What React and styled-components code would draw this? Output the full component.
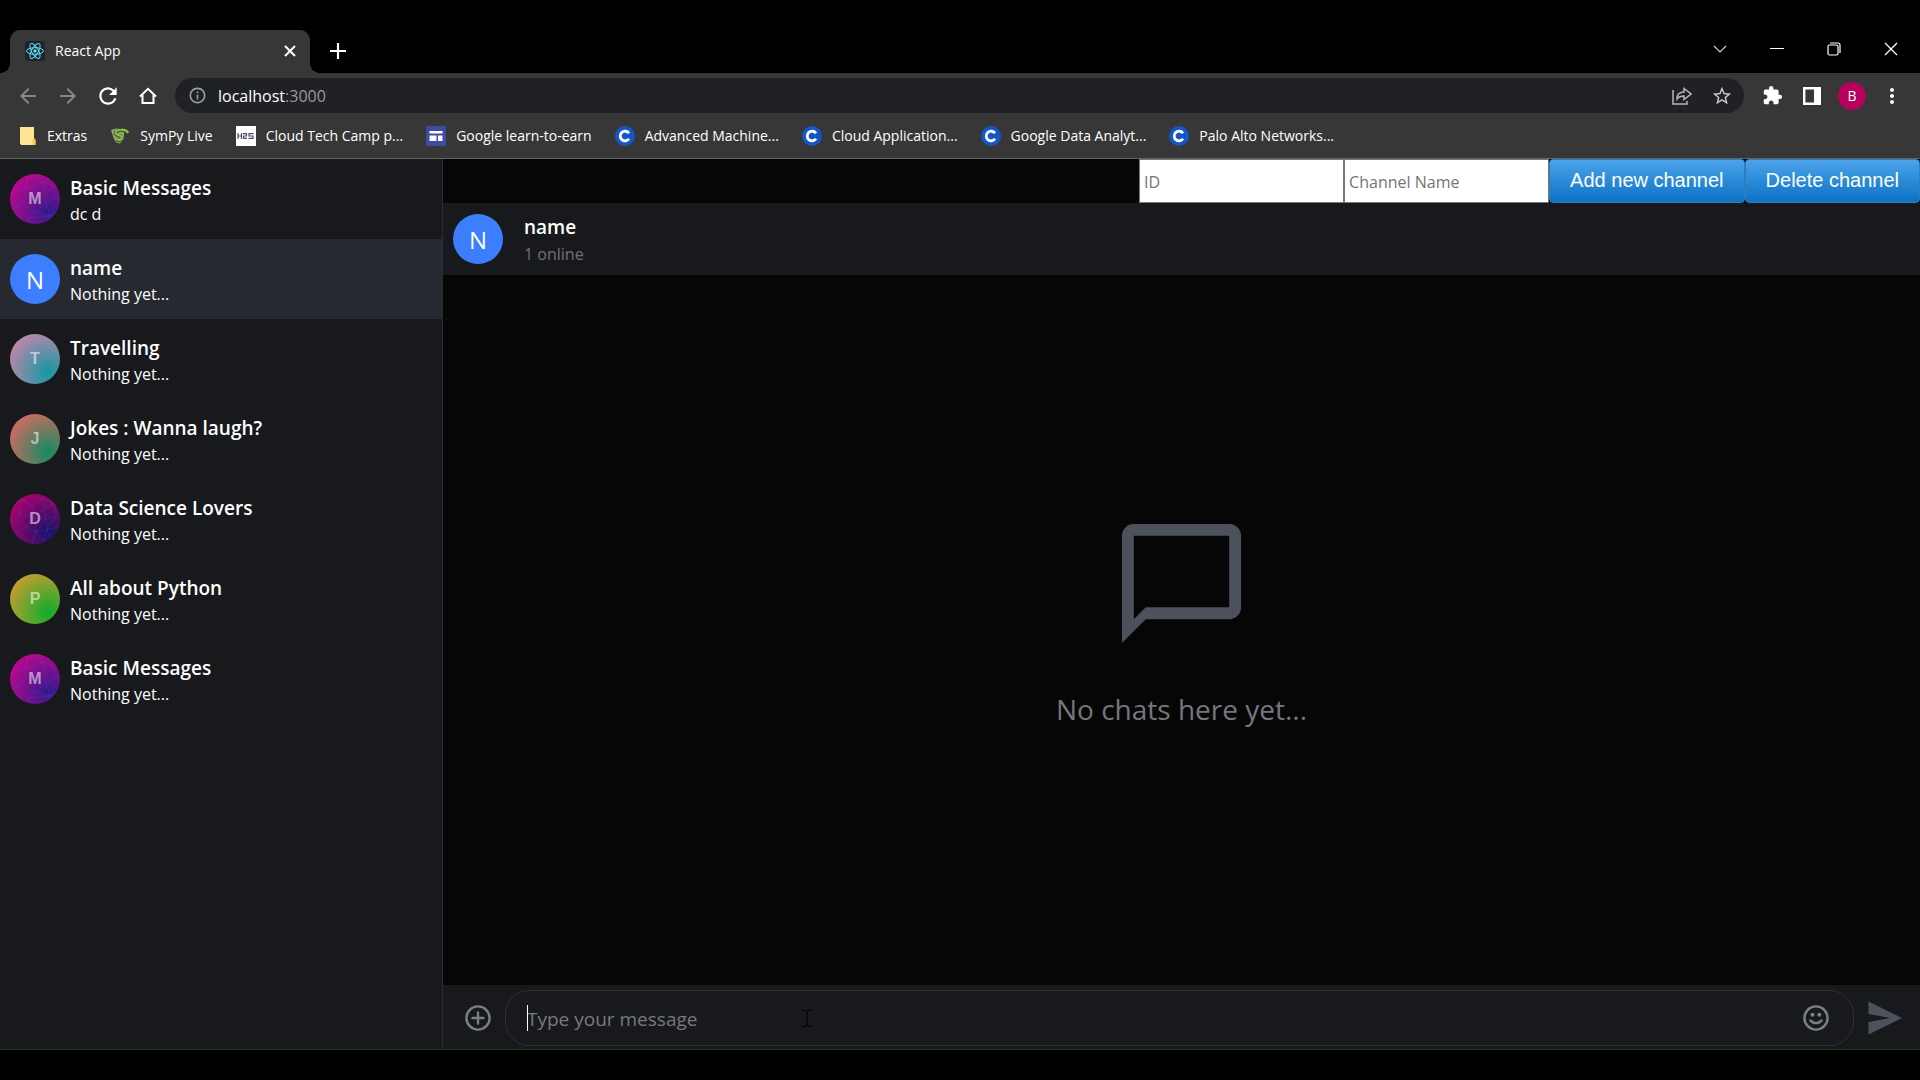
import React from "react";
import styled, { createGlobalStyle } from "styled-components";
import {
  MdArrowBack,
  MdArrowForward,
  MdRefresh,
  MdInfoOutline,
  MdStarBorder,
  MdExtension,
  MdMoreVert,
} from "react-icons/md";

const channels = [
  { id: 1, name: "Basic Messages", last: "dc d", letter: "M", from: "#c4078c", to: "#2f1a8e", mesh: "wide" },
  { id: 2, name: "name", last: "Nothing yet...", letter: "N", active: true },
  { id: 3, name: "Travelling", last: "Nothing yet...", letter: "T", from: "#c985ab", to: "#1597a3" },
  { id: 4, name: "Jokes : Wanna laugh?", last: "Nothing yet...", letter: "J", from: "#d96a60", to: "#148a60" },
  { id: 5, name: "Data Science Lovers", last: "Nothing yet...", letter: "D", from: "#b5006e", to: "#121468", mesh: "fine" },
  { id: 6, name: "All about Python", last: "Nothing yet...", letter: "P", from: "#cf9d2f", to: "#10ac2c" },
  { id: 7, name: "Basic Messages", last: "Nothing yet...", letter: "M", from: "#c4078c", to: "#2f1a8e", mesh: "wide" },
];

const bookmarks = [
  { title: "Extras", icon: "folder" },
  { title: "SymPy Live", icon: "sympy" },
  { title: "Cloud Tech Camp p...", icon: "h2s" },
  { title: "Google learn-to-earn", icon: "sites" },
  { title: "Advanced Machine...", icon: "coursera" },
  { title: "Cloud Application...", icon: "coursera" },
  { title: "Google Data Analyt...", icon: "coursera" },
  { title: "Palo Alto Networks...", icon: "coursera" },
];

const meshes = {
  wide: "M17 0V14L0 20M17 14L33 8L30 0M33 8L44 12L50 6M17 14L12 30L0 36M12 30L24 38L17 50M24 38L36 28L33 8M36 28L50 22M36 28L40 42L50 36M40 42L17 44M40 42L36 50M24 38L40 42",
  fine: "M0 12L12 5L22 12L32 4L44 10M12 5L9 20L22 12L24 24L34 14L32 4M34 14L44 10L46 22L36 25L34 14M9 20L0 28M9 20L24 24L16 33L9 20M16 33L6 40M16 33L26 38L24 24L36 25L26 38L22 50M26 38L37 36L36 25M37 36L50 32M46 22L37 36L42 46M26 38L34 48L37 36",
};

function ReactLogo() {
  return (
    <svg width="20" height="20" viewBox="0 0 20 20" aria-hidden="true">
      <rect width="20" height="20" rx="3" fill="#20232a" />
      <g fill="none" stroke="#61dafb" strokeWidth="1">
        <ellipse cx="10" cy="10" rx="8.5" ry="3.3" />
        <ellipse cx="10" cy="10" rx="8.5" ry="3.3" transform="rotate(60 10 10)" />
        <ellipse cx="10" cy="10" rx="8.5" ry="3.3" transform="rotate(120 10 10)" />
      </g>
      <circle cx="10" cy="10" r="1.7" fill="#61dafb" />
    </svg>
  );
}

function BookmarkIcon({ name }) {
  if (name === "folder") {
    return (
      <svg width="20" height="20" viewBox="0 0 20 20" aria-hidden="true">
        <path d="M3 1h14v11l1.500 2v5H4.500L3 18z" fill="#ffe591" />
        <path d="M15.500 19v-5l1.500-2 1.500 2v5z" fill="#f2c94c" />
      </svg>
    );
  }
  if (name === "sympy") {
    return (
      <svg width="20" height="20" viewBox="0 0 20 20" aria-hidden="true">
        <path d="M1 4l5-1.500 8 1V13l-4 4.500-4-1L3.500 12z" fill="#a39c78" />
        <path d="M18 7.500C17 4.500 14 4 11 4.300 7 4.500 4.800 6 5.500 8c.8 2.200 6.500 1.500 6.500 4.300 0 2.200-3 2.700-5.500 1.400" fill="none" stroke="#35661f" strokeWidth="3.600" />
        <path d="M18 7C17 4 14 3.500 11 3.800 7 4 4.800 5.500 5.500 7.500c.8 2.200 6.500 1.500 6.500 4.300 0 2.200-3 2.700-5.500 1.400" fill="none" stroke="#8fc24a" strokeWidth="2" />
      </svg>
    );
  }
  if (name === "h2s") {
    return (
      <svg width="20" height="20" viewBox="0 0 20 20" aria-hidden="true">
        <rect width="20" height="20" fill="#fff" />
        <path d="M2 7v6M5.500 7v6M2 10h3.500M7 7.600h3.500v2.400H7.600v2.400h3.400M17.500 7.600H13v2.400h4v2.400h-4.500" fill="none" stroke="#4a4d66" strokeWidth="1.200" />
      </svg>
    );
  }
  if (name === "sites") {
    return (
      <svg width="20" height="20" viewBox="0 0 20 20" aria-hidden="true">
        <rect width="20" height="20" fill="#4049a8" />
        <path d="M3.500 5h13v2.500h-13zM3.500 9.500h7V15h-7zM12 9.500h4.500V15H12z" fill="#fff" />
      </svg>
    );
  }
  return (
    <svg width="20" height="20" viewBox="0 0 20 20" aria-hidden="true">
      <circle cx="10" cy="10" r="10" fill="#1556c4" />
      <path d="M14 7.300A4.800 4.800 0 1 0 14 12.700" fill="none" stroke="#fff" strokeWidth="2.800" />
    </svg>
  );
}

function Avatar({ channel }) {
  return (
    <AvatarCircle $from={channel.from} $to={channel.to}>
      {channel.mesh && (
        <Mesh viewBox="0 0 50 50" aria-hidden="true">
          <path d={meshes[channel.mesh]} />
        </Mesh>
      )}
      <span>{channel.letter}</span>
    </AvatarCircle>
  );
}

function Browser() {
  return (
    <header>
      <TabStrip>
        <Tab>
          <ReactLogo />
          <TabTitle>React App</TabTitle>
          <IconButton $size={20} aria-label="Close tab">
            <svg width="12" height="12" viewBox="0 0 12 12" stroke="#fff" strokeWidth="2">
              <path d="M1 1l10 10M11 1L1 11" />
            </svg>
          </IconButton>
        </Tab>
        <NewTab aria-label="New tab">
          <svg width="16" height="16" viewBox="0 0 16 16" stroke="#fff" strokeWidth="2.200">
            <path d="M8 0v16M0 8h16" />
          </svg>
        </NewTab>
        <WindowControls>
          <IconButton $size={57} aria-label="Search tabs">
            <svg width="14" height="8" viewBox="0 0 14 8" fill="none" stroke="#ccc" strokeWidth="1.200">
              <path d="M1 1l6 6 6-6" />
            </svg>
          </IconButton>
          <IconButton $size={57} aria-label="Minimize">
            <svg width="14" height="1" viewBox="0 0 14 1">
              <path d="M0 .5h14" stroke="#fff" />
            </svg>
          </IconButton>
          <IconButton $size={57} aria-label="Restore">
            <svg width="14" height="14" viewBox="0 0 14 14" fill="none" stroke="#fff" strokeWidth="1.200">
              <rect x="1" y="3" width="10" height="10" rx="1.500" />
              <path d="M3 1h8a2 2 0 0 1 2 2v8" />
            </svg>
          </IconButton>
          <IconButton $size={57} aria-label="Close">
            <svg width="14" height="14" viewBox="0 0 14 14" stroke="#fff" strokeWidth="1.300">
              <path d="M1 1l12 12M13 1L1 13" />
            </svg>
          </IconButton>
        </WindowControls>
      </TabStrip>
      <NavBar>
        <IconButton $size={40} $color="#878787" aria-label="Back"><MdArrowBack size={24} /></IconButton>
        <IconButton $size={40} $color="#878787" aria-label="Forward"><MdArrowForward size={24} /></IconButton>
        <IconButton $size={40} aria-label="Reload"><MdRefresh size={26} /></IconButton>
        <IconButton $size={40} aria-label="Home">
          <svg width="18" height="18" viewBox="0 0 18 18" fill="none" stroke="#fff" strokeWidth="2">
            <path d="M1 9.500L9 1.800l8 7.700M3.500 8v8h11V8" />
          </svg>
        </IconButton>
        <AddressBar>
          <MdInfoOutline size={19} color="#9aa0a6" />
          <Address>localhost<span>:3000</span></Address>
          <IconButton $size={40} $color="#b4b6b9" aria-label="Share">
            <svg width="20" height="18" viewBox="0 0 20 18" fill="none" stroke="currentColor" strokeWidth="1.500">
              <path d="M1 3v14h14v-3M5 12c0-5 3-7 7-7V1.500L19 7l-7 5.500V9c-3 0-5 .5-7 3z" />
            </svg>
          </IconButton>
          <IconButton $size={40} $color="#c8cacd" aria-label="Bookmark"><MdStarBorder size={22} /></IconButton>
        </AddressBar>
        <NavActions>
          <IconButton $size={40} aria-label="Extensions"><MdExtension size={21} /></IconButton>
          <IconButton $size={40} aria-label="Side panel">
            <svg width="18" height="18" viewBox="0 0 18 18" fill="none">
              <path d="M1.200 1.200h15.600v15.600H1.200z" stroke="#fff" strokeWidth="2.400" />
              <path d="M11 1h6v16h-6z" fill="#fff" />
            </svg>
          </IconButton>
          <Profile aria-label="Profile">B</Profile>
          <IconButton $size={40} aria-label="Menu"><MdMoreVert size={24} /></IconButton>
        </NavActions>
      </NavBar>
      <BookmarksBar>
        {bookmarks.map((b) => (
          <Bookmark key={b.title} href="#">
            <BookmarkIcon name={b.icon} />
            {b.title}
          </Bookmark>
        ))}
      </BookmarksBar>
    </header>
  );
}

function ChannelList() {
  return (
    <Sidebar>
      {channels.map((channel) => (
        <ChannelRow key={channel.id} $active={channel.active}>
          <Avatar channel={channel} />
          <ChannelText>
            <ChannelName>{channel.name}</ChannelName>
            <LastMessage>{channel.last}</LastMessage>
          </ChannelText>
        </ChannelRow>
      ))}
    </Sidebar>
  );
}

function Chat() {
  const current = channels.find((c) => c.active);
  return (
    <ChatPane>
      <ChannelForm>
        <FormInput type="text" placeholder="ID" aria-label="ID" />
        <FormInput type="text" placeholder="Channel Name" aria-label="Channel Name" />
        <FormButton type="button">Add new channel</FormButton>
        <FormButton type="button">Delete channel</FormButton>
      </ChannelForm>
      <ChatHeader>
        <Avatar channel={current} />
        <ChannelText>
          <ChannelName>{current.name}</ChannelName>
          <Online>1 online</Online>
        </ChannelText>
      </ChatHeader>
      <EmptyState>
        <svg width="143" height="143" viewBox="0 0 24 24" fill="#4d515c" aria-hidden="true">
          <path d="M4 2h16a2 2 0 0 1 2 2v12a2 2 0 0 1-2 2H6l-4 4V4a2 2 0 0 1 2-2zm0 2v14l2-2h14V4z" fillRule="evenodd" />
        </svg>
        <p>No chats here yet...</p>
      </EmptyState>
      <Composer>
        <IconButton $size={54} $color="#7c7e87" aria-label="Attach">
          <svg width="26" height="26" viewBox="0 0 26 26" fill="none" stroke="currentColor" strokeWidth="2.400" strokeLinecap="round">
            <circle cx="13" cy="13" r="11.600" />
            <path d="M13 7.500v11M7.500 13h11" />
          </svg>
        </IconButton>
        <MessageBox>
          <Caret />
          <MessageInput type="text" placeholder="Type your message" aria-label="Message" />
          <IconButton $size={26} $color="#7c7e87" aria-label="Emoji">
            <svg width="26" height="26" viewBox="0 0 26 26" fill="none" stroke="currentColor" strokeWidth="2.400" strokeLinecap="round">
              <circle cx="13" cy="13" r="11.600" />
              <path d="M7.500 15.500c2.500 3.500 8.500 3.500 11 0" />
              <g fill="currentColor" stroke="none">
                <circle cx="9.500" cy="9.800" r="2" />
                <circle cx="16.300" cy="9.800" r="2" />
              </g>
            </svg>
          </IconButton>
          <Pointer width="10" height="17" viewBox="0 0 10 17" aria-hidden="true">
            <path d="M0 .5h4l1 1 1-1h4M5 1v15M0 16.500h4l1-1 1 1h4" />
          </Pointer>
        </MessageBox>
        <IconButton $size={62} $color="#4d515c" aria-label="Send">
          <svg width="34" height="34" viewBox="0 0 34 34" fill="currentColor">
            <path d="M.5.500L34 17 .5 33.500V21L22 17 .5 13z" />
          </svg>
        </IconButton>
      </Composer>
    </ChatPane>
  );
}

function App() {
  return (
    <Screen>
      <GlobalStyle />
      <Browser />
      <Messenger>
        <ChannelList />
        <Chat />
      </Messenger>
    </Screen>
  );
}

const GlobalStyle = createGlobalStyle`
  * {
    box-sizing: border-box;
  }
  body {
    margin: 0;
    background: #000;
    color: #fff;
    font-family: "Open Sans", "Noto Sans", sans-serif;
    font-size: 16px;
  }
  button, input {
    font-family: inherit;
    margin: 0;
  }
  p, h2 {
    margin: 0;
  }
`;

const Screen = styled.div`
  display: flex;
  flex-direction: column;
  min-height: 100vh;
  padding: 30px 0;
`;

const IconButton = styled.button`
  display: flex;
  align-items: center;
  justify-content: center;
  flex: none;
  width: ${(p) => p.$size}px;
  padding: 0;
  border: 0;
  background: none;
  color: ${(p) => p.$color || "#fff"};
`;

const TabStrip = styled.div`
  display: flex;
  height: 43px;
  padding-left: 10px;
`;

const Tab = styled.div`
  position: relative;
  display: flex;
  align-items: center;
  gap: 10px;
  width: 300px;
  padding: 0 10px 2px 15px;
  border-radius: 10px 10px 0 0;
  background: #373737;
  &::before, &::after {
    content: "";
    position: absolute;
    bottom: 0;
    width: 10px;
    height: 10px;
  }
  &::before {
    left: -10px;
    background: radial-gradient(circle at 0 0, #000 10px, #373737 10px);
  }
  &::after {
    right: -10px;
    background: radial-gradient(circle at 100% 0, #000 10px, #373737 10px);
  }
`;

const TabTitle = styled.span`
  flex: 1;
  font-size: 14px;
`;

const NewTab = styled(IconButton).attrs({ $size: 55 })`
  padding-bottom: 2px;
`;

const WindowControls = styled.div`
  display: flex;
  margin-left: auto;
  padding: 0 1px 6px 0;
`;

const NavBar = styled.nav`
  display: flex;
  align-items: center;
  height: 40px;
  padding: 5px 8px 0;
  background: #373737;
`;

const AddressBar = styled.div`
  display: flex;
  align-items: center;
  flex: 1;
  height: 35px;
  margin-left: 7px;
  padding: 0 2px 0 13px;
  border-radius: 18px;
  background: #202124;
`;

const Address = styled.div`
  flex: 1;
  margin-left: 11px;
  span {
    color: #9a9a9a;
  }
`;

const NavActions = styled.div`
  display: flex;
  align-items: center;
  margin-left: 8px;
`;

const Profile = styled.button`
  width: 28px;
  height: 28px;
  margin: 0 6px;
  padding: 0;
  border: 0;
  border-radius: 50%;
  background: #b8005f;
  color: #fff;
  font-size: 14px;
`;

const BookmarksBar = styled.div`
  display: flex;
  align-items: center;
  gap: 23px;
  height: 46px;
  padding-left: 17px;
  border-bottom: 1px solid #636363;
  background: #373737;
`;

const Bookmark = styled.a`
  display: flex;
  align-items: center;
  gap: 10px;
  color: #fff;
  font-size: 14px;
  text-decoration: none;
  white-space: nowrap;
`;

const Messenger = styled.main`
  display: flex;
  flex: 1;
  border-bottom: 1px solid #153a18;
`;

const Sidebar = styled.aside`
  flex: none;
  width: 443px;
  border-right: 1px solid #292c34;
  background: #18191d;
`;

const ChannelRow = styled.div`
  display: flex;
  align-items: center;
  gap: 10px;
  height: 80px;
  padding: 0 10px;
  background: ${(p) => (p.$active ? "#262930" : "transparent")};
`;

const AvatarCircle = styled.div`
  display: grid;
  place-items: center;
  flex: none;
  width: 50px;
  height: 50px;
  overflow: hidden;
  border-radius: 50%;
  background: ${(p) => (p.$from ? `radial-gradient(circle at 76% 76%, ${p.$to}, ${p.$from} 86%)` : "#3d7eff")};
  color: ${(p) => (p.$from ? "rgba(255, 255, 255, 0.55)" : "#fff")};
  font: ${(p) => (p.$from ? '700 16px "Liberation Sans", sans-serif' : '400 24px "Open Sans", sans-serif')};
  > * {
    grid-area: 1 / 1;
  }
`;

const Mesh = styled.svg`
  width: 50px;
  height: 50px;
  path {
    fill: none;
    stroke: rgba(170, 90, 255, 0.15);
  }
`;

const ChannelText = styled.div`
  padding-top: 4px;
`;

const ChannelName = styled.h2`
  font-size: 19px;
  font-weight: 600;
  line-height: 26px;
`;

const LastMessage = styled.p`
  line-height: 26px;
`;

const ChatPane = styled.section`
  display: flex;
  flex: 1;
  flex-direction: column;
  min-width: 0;
  background: #060606;
`;

const ChannelForm = styled.form`
  display: flex;
  justify-content: flex-end;
  height: 44px;
`;

const FormInput = styled.input`
  width: 205px;
  padding: 4px 4px 2px;
  border: 1px solid #767676;
  border-radius: 0;
  background: #fff;
  font-size: 16px;
  &::placeholder {
    color: #757575;
  }
`;

const FormButton = styled.button`
  padding: 0 20px 2px;
  border: 1px solid #2c7fbd;
  border-radius: 4px;
  background: linear-gradient(#4ba3ea, #0b72c5);
  color: #fff;
  font-family: "Liberation Sans", sans-serif;
  font-size: 20px;
`;

const ChatHeader = styled.div`
  display: flex;
  align-items: center;
  gap: 21px;
  height: 72px;
  padding: 0 10px;
  background: #18191d;
`;

const Online = styled(LastMessage)`
  color: #6f7176;
  line-height: 28px;
`;

const EmptyState = styled.div`
  display: flex;
  flex: 1;
  flex-direction: column;
  align-items: center;
  justify-content: center;
  gap: 34px;
  padding-bottom: 20px;
  color: #76777d;
  font-size: 28px;
  line-height: 40px;
`;

const Composer = styled.div`
  display: flex;
  align-items: center;
  height: 64px;
  padding: 2px 4px 0 8px;
  background: #18191d;
`;

const MessageBox = styled.div`
  position: relative;
  display: flex;
  align-items: center;
  flex: 1;
  height: 56px;
  padding: 0 24px 0 21px;
  border: 1px solid #2c2f36;
  border-radius: 24px;
`;

const MessageInput = styled.input`
  flex: 1;
  padding: 2px 0 0;
  border: 0;
  outline: 0;
  background: none;
  color: #fff;
  font-size: 19px;
  &::placeholder {
    color: #777980;
  }
`;

const Caret = styled.span`
  position: absolute;
  left: 21px;
  width: 1px;
  height: 26px;
  background: #fff;
`;

const Pointer = styled.svg`
  position: absolute;
  left: 296px;
  fill: none;
  stroke: #000;
`;

export default App;
